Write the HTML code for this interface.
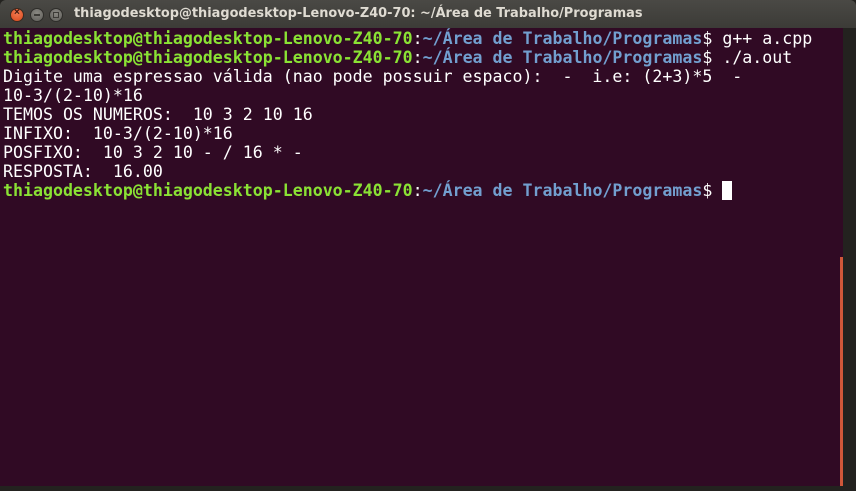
<!DOCTYPE html>
<html><head><style>
html,body{margin:0;padding:0;width:856px;height:491px;overflow:hidden;background:#23221f}
#title{position:absolute;left:0;top:0;width:856px;height:28px;background:linear-gradient(#4a4945,#3c3b37);border-radius:6px 6px 0 0}
.btn{position:absolute;top:8px;width:14px;height:14px;border-radius:50%;box-sizing:border-box}
#t{position:absolute;left:74px;top:6px;font:bold 12.9px "DejaVu Sans","Liberation Sans",sans-serif;color:#dfdbd2;white-space:nowrap}
#term{position:absolute;left:0;top:28px;width:843px;height:458px;background:#300a24}
#sb{position:absolute;left:840px;top:257px;width:3px;height:229px;background:#d0573a}
pre{position:absolute;left:3px;top:29px;margin:0;font:16.6px/19px "DejaVu Sans Mono","Liberation Mono",monospace;color:#fff}
.g{color:#8ae234;font-weight:bold}.b{color:#729fcf;font-weight:bold}
.c{background:#fff}
</style></head><body>
<div id="title">
<div class="btn" style="left:10px;background:radial-gradient(circle at 50% 35%,#f37b52,#d9491c);border:1px solid #3a2a20"><span style="position:absolute;left:3px;top:-2px;font:bold 10px sans-serif;color:#3c1a10">×</span></div>
<div class="btn" style="left:30px;background:radial-gradient(circle at 50% 35%,#8a8983,#5f5e5a);border:1px solid #2e2d2a"><span style="position:absolute;left:3px;top:5px;width:6px;height:2px;background:#3c3b37"></span></div>
<div class="btn" style="left:49px;background:radial-gradient(circle at 50% 35%,#8a8983,#5f5e5a);border:1px solid #2e2d2a"><span style="position:absolute;left:3px;top:3px;width:4px;height:4px;border:1px solid #3c3b37"></span></div>
<div id="t">thiagodesktop@thiagodesktop-Lenovo-Z40-70: ~/Área de Trabalho/Programas</div>
</div>
<div id="term"></div>
<div id="sb"></div>
<pre><span class="g">thiagodesktop@thiagodesktop-Lenovo-Z40-70</span>:<span class="b">~/Área de Trabalho/Programas</span>$ g++ a.cpp
<span class="g">thiagodesktop@thiagodesktop-Lenovo-Z40-70</span>:<span class="b">~/Área de Trabalho/Programas</span>$ ./a.out
Digite uma espressao válida (nao pode possuir espaco):  -  i.e: (2+3)*5  -
10-3/(2-10)*16
TEMOS OS NUMEROS:  10 3 2 10 16
INFIXO:  10-3/(2-10)*16
POSFIXO:  10 3 2 10 - / 16 * -
RESPOSTA:  16.00
<span class="g">thiagodesktop@thiagodesktop-Lenovo-Z40-70</span>:<span class="b">~/Área de Trabalho/Programas</span>$ <span class="c"> </span></pre>
</body></html>
